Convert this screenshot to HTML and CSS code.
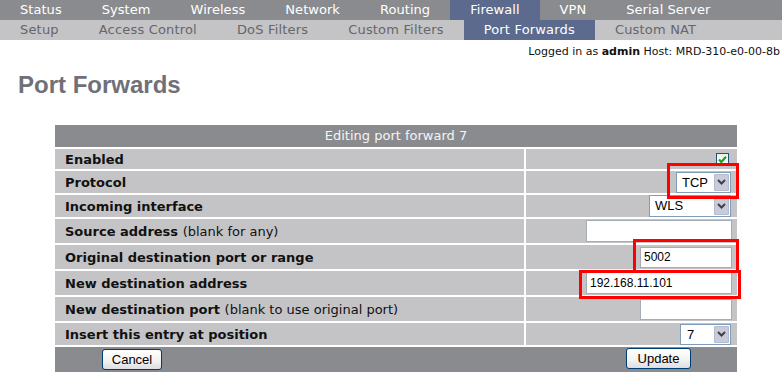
FILE: index.html
```html
<!DOCTYPE html>
<html lang="en">
<head>
    <meta charset="UTF-8">
    <title>Port Forwards</title>
    <link rel="stylesheet" href="styles.css">
</head>
<body>
    <div class="topnav">
        <a class="tab">Status</a>
        <a class="tab">System</a>
        <a class="tab">Wireless</a>
        <a class="tab">Network</a>
        <a class="tab">Routing</a>
        <a class="tab is-active">Firewall</a>
        <a class="tab">VPN</a>
        <a class="tab">Serial Server</a>
    </div>
    <div class="subnav">
        <a class="tab">Setup</a>
        <a class="tab">Access Control</a>
        <a class="tab">DoS Filters</a>
        <a class="tab">Custom Filters</a>
        <a class="tab is-active">Port Forwards</a>
        <a class="tab">Custom NAT</a>
    </div>

    <div class="login">Logged in as <b>admin</b> Host: MRD-310-e0-00-8b</div>

    <h1 class="page-title">Port Forwards</h1>

    <div class="pf-table">
        <div class="pf-head">Editing port forward 7</div>

        <div class="pf-label">Enabled</div>
        <div class="pf-field">
            <span class="checkbox">
                <svg width="11" height="11" viewBox="0 0 11 11"><path d="M2 5.5 L4.3 8 L9 2.8" fill="none" stroke="#21a121" stroke-width="2.2"/></svg>
            </span>
        </div>

        <div class="pf-label">Protocol</div>
        <div class="pf-field">
            <div class="select select-proto"><span class="select-value">TCP</span><span class="select-arrow"></span></div>
        </div>

        <div class="pf-label">Incoming interface</div>
        <div class="pf-field">
            <div class="select select-iface"><span class="select-value">WLS</span><span class="select-arrow"></span></div>
        </div>

        <div class="pf-label">Source address <span class="hint">(blank for any)</span></div>
        <div class="pf-field"><input class="text-input input-wide" type="text" value=""></div>

        <div class="pf-label">Original destination port or range</div>
        <div class="pf-field"><input class="text-input input-short" type="text" value="5002"></div>

        <div class="pf-label">New destination address</div>
        <div class="pf-field"><input class="text-input input-wide" type="text" value="192.168.11.101"></div>

        <div class="pf-label">New destination port <span class="hint">(blank to use original port)</span></div>
        <div class="pf-field"><input class="text-input input-short" type="text" value=""></div>

        <div class="pf-label">Insert this entry at position</div>
        <div class="pf-field">
            <div class="select select-pos"><span class="select-value">7</span><span class="select-arrow"></span></div>
        </div>

        <div class="pf-buttons">
            <button class="btn btn-cancel">Cancel</button>
            <button class="btn btn-update">Update</button>
        </div>

        <!-- red annotation boxes drawn over the form -->
        <div class="mark mark-proto"></div>
        <div class="mark mark-port"></div>
        <div class="mark mark-addr"></div>
    </div>
</body>
</html>
```

FILE: styles.css
```css
:root {
    --bar-dark: #8a8b8f;
    --bar-light: #c4c4c6;
    --active: #5b6a8d;
    --sub-text: #66666a;
    --heading: #707079;
    --mark: #ff0000;
}

html { overflow: hidden; }

body {
    margin: 0;
    background: #fff;
    font-family: "DejaVu Sans", Verdana, sans-serif;
    font-size: 13px;
    color: #111;
}

/* --- Navigation bars --- */
.topnav, .subnav { display: flex; height: 20px; line-height: 20px; }
.topnav { background: var(--bar-dark); color: #fff; letter-spacing: 0.05px; }
.subnav { background: var(--bar-light); color: var(--sub-text); letter-spacing: 0.18px; }
.tab { padding: 0 20px; white-space: nowrap; }
.tab.is-active { background: var(--active); color: #fff; }

.login {
    margin-top: 5px;
    padding-right: 2px;
    height: 14px;
    line-height: 14px;
    font-size: 11px;
    text-align: right;
    color: #111;
}

.page-title {
    margin: 12px 0 0 18px;
    height: 28px;
    line-height: 28px;
    font-family: "Liberation Sans", Arial, sans-serif;
    font-size: 24px;
    font-weight: bold;
    color: var(--heading);
}

/* --- Edit form --- */
.pf-table {
    position: relative;
    margin: 26px 0 0 55px;
    width: 682px;
    display: grid;
    grid-template-columns: 469px 211px;
    grid-template-rows: 22px 20px 22px 22px 24px 24px 24px 24px 22px 25px;
    gap: 2px;
}

.pf-head {
    grid-column: 1 / -1;
    background: var(--bar-dark);
    color: #f4f4f4;
    text-align: center;
    line-height: 22px;
}

.pf-label {
    background: var(--bar-light);
    padding-left: 10px;
    font-weight: bold;
    display: flex;
    align-items: center;
    white-space: pre;
}
.pf-label .hint { font-weight: normal; }

.pf-field {
    background: var(--bar-light);
    padding-right: 5px;
    display: flex;
    align-items: center;
    justify-content: flex-end;
}

.checkbox {
    width: 13px; height: 13px; box-sizing: border-box;
    margin-right: 3px;
    border: 1px solid #1c5180;
    background: linear-gradient(#f0f0ea, #fff);
    display: flex; align-items: center; justify-content: center;
}

.select {
    box-sizing: border-box;
    height: 21px;
    margin-right: 1px;
    border: 1px solid #7f9db9;
    background: #fff;
    display: flex;
    align-items: stretch;
    font-family: "Liberation Sans", Arial, sans-serif;
    font-size: 13px;
    color: #000;
}
.select-value { flex: 1; padding-left: 5px; line-height: 19px; }
.select-arrow {
    width: 15px;
    margin: 1px;
    border-radius: 1px;
    background: #c8cbdb url("data:image/svg+xml,%3Csvg xmlns='http://www.w3.org/2000/svg' width='9' height='6'%3E%3Cpath d='M1 1 L4.5 4.5 L8 1' fill='none' stroke='%23404040' stroke-width='2'/%3E%3C/svg%3E") center no-repeat;
    box-shadow: inset 0 0 0 1px #b6bacb;
}
.select-proto { width: 55px; }
.select-iface { width: 82px; height: 22px; }
.select-iface .select-value { line-height: 20px; }
.select-pos { width: 51px; }
.select-pos .select-value { padding-left: 6px; }

.text-input {
    box-sizing: border-box;
    height: 21px;
    margin: 0;
    padding: 0 3px;
    border: 1px solid #a5acb5;
    background: #fff;
    font-family: "Liberation Sans", Arial, sans-serif;
    font-size: 12px;
    color: #000;
    outline: none;
}
.input-wide { width: 146px; height: 22px; }
.input-short { width: 92px; }

.pf-buttons {
    grid-column: 1 / -1;
    background: var(--bar-dark);
    padding: 1px 46px 0 47px;
    display: flex;
    justify-content: space-between;
    align-items: flex-start;
}

.btn {
    height: 21px;
    padding: 0;
    border: 1px solid #003c74;
    border-radius: 3px;
    background: linear-gradient(#ffffff, #f2f2f0 60%, #dcdce4);
    font-family: "Liberation Sans", Arial, sans-serif;
    font-size: 13px;
    color: #000;
}
.btn-cancel { width: 60px; margin-top: 1px; }
.btn-update { width: 65px; }

/* --- Annotation boxes --- */
.mark {
    position: absolute;
    border: 3px solid var(--mark);
    box-sizing: border-box;
}
.mark-proto { left: 612px; top: 38px; width: 72px; height: 36px; }
.mark-port { left: 578px; top: 114px; width: 106px; height: 34px; }
.mark-addr { left: 524px; top: 145px; width: 162px; height: 29px; }
```
